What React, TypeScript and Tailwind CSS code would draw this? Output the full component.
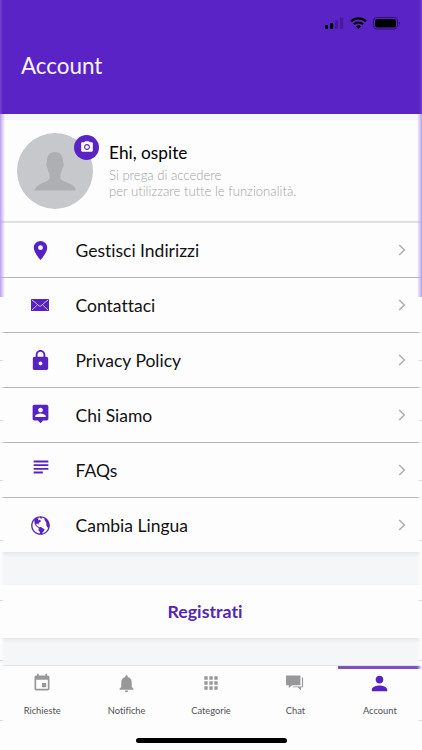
import * as React from "react";
import {
  MdApps,
  MdCameraAlt,
  MdEvent,
  MdLocationOn,
  MdLock,
  MdNotifications,
  MdPerson,
  MdSubject,
} from "react-icons/md";
import { IoMdGlobe } from "react-icons/io";

function MailIcon() {
  return (
    <svg width="18" height="12" viewBox="0 0 18 12" fill="none" className="-ml-px">
      <rect width="18" height="12" rx="0.5" fill="#5722c4" />
      <path d="M1 1l8 6.500L17 1M1 11l5.300-5M17 11l-5.300-5" stroke="#d9ccf5" strokeWidth="0.9" />
    </svg>
  );
}

function PersonPinIcon() {
  return (
    <svg width="21" height="21" viewBox="0 0 24 24" fill="currentColor" className="-mt-1">
      <path d="M19 2H5c-1.110 0-2 .9-2 2v14c0 1.100.89 2 2 2h4l3 3 3-3h4c1.100 0 2-.9 2-2V4c0-1.100-.9-2-2-2zm-7 3.300c1.490 0 2.700 1.210 2.700 2.700s-1.210 2.700-2.700 2.700S9.300 9.490 9.300 8s1.210-2.700 2.700-2.700zM18 16H6v-.9c0-2 4-3.100 6-3.100s6 1.100 6 3.100v.9z" />
    </svg>
  );
}

function ChatIcon() {
  return (
    <svg width="18" height="16" viewBox="0 0 18 16" fill="currentColor">
      <path d="M.6.500h13.200c.4 0 .6.200.6.600v8.600c0 .4-.2.600-.6.600H6L2.800 13v-2.700H.6c-.4 0-.6-.2-.6-.6V1.100C0 .7.200.5.600.5z" />
      <path d="M15.900 2.500h.6c.4 0 .6.200.6.600v8.600c0 .4-.2.600-.6.600h-1.500v3l-3.300-3H6.300l.8-.8h8.800z" />
    </svg>
  );
}

const menuItems = [
  { label: "Gestisci Indirizzi", icon: <MdLocationOn size={23} /> },
  { label: "Contattaci", icon: <MailIcon /> },
  { label: "Privacy Policy", icon: <MdLock size={23} /> },
  { label: "Chi Siamo", icon: <PersonPinIcon /> },
  { label: "FAQs", icon: <MdSubject size={22} className="-mt-1.5" /> },
  { label: "Cambia Lingua", icon: <IoMdGlobe size={23} /> },
];

const tabs = [
  { label: "Richieste", icon: <MdEvent size={20} /> },
  { label: "Notifiche", icon: <MdNotifications size={21} /> },
  { label: "Categorie", icon: <MdApps size={20} /> },
  { label: "Chat", icon: <ChatIcon /> },
  { label: "Account", icon: <MdPerson size={23} />, active: true },
];

function StatusIcons() {
  return (
    <svg width="76" height="14" viewBox="0 0 76 14" className="absolute left-[324px] top-4">
      <rect x="1" y="9" width="3" height="4" rx="0.8" />
      <rect x="6" y="7" width="3.2" height="6" rx="0.8" />
      <rect x="11" y="4.3" width="3.2" height="8.7" rx="0.8" opacity="0.22" />
      <rect x="16" y="1.5" width="3.2" height="11.5" rx="0.8" opacity="0.22" />
      <path d="M27 5.400a11 11 0 0 1 15 0M29.800 8.300a7 7 0 0 1 9.400 0" fill="none" stroke="#000" strokeWidth="2.2" />
      <path d="M32 10.500a3.700 3.700 0 0 1 5 0L34.500 13z" />
      <rect x="49.500" y="1.500" width="24" height="11.500" rx="3.200" fill="none" stroke="#000" opacity="0.45" />
      <rect x="51" y="3" width="21" height="8.500" rx="2" />
      <path d="M75 5.500v3.500c1.300-.6 1.300-2.900 0-3.500z" opacity="0.5" />
    </svg>
  );
}

function Header() {
  return (
    <header className="relative h-[114px] bg-[#5a23c6] px-[21px] pt-[51px]">
      <StatusIcons />
      <h1 className="text-[22.400px] leading-[30px] text-[#f8f4ff]">Account</h1>
    </header>
  );
}

function Profile() {
  return (
    <section className="mt-1.5 flex h-[101px] items-center bg-[#fdfdfe] pl-[17px]">
      <div className="relative size-[76px] shrink-0 rounded-full bg-[#c7c8cc]">
        <svg width="76" height="76" viewBox="0 0 76 76">
          <path
            d="M38 19c-5.500 0-8.500 4-8 10l-.8 1.500c0 2 .5 4 1.500 5 .3 2.500 1 4 1.800 5.500v4.500c-1.500 3.500-10.500 4.500-13 8.500L17 57.500h42L57.500 54c-2.500-4-12.500-5-14-8.500V41c.8-1.500 1.500-3 1.800-5.500 1-1 1.500-3 1.500-5L46 29c.5-6-2.500-10-8-10z"
            fill="#aeafb2"
          />
        </svg>
        <div className="absolute left-[57px] top-0.5 flex size-[25px] items-center justify-center rounded-full bg-[#5a23c6] text-white">
          <MdCameraAlt size={14} />
        </div>
      </div>
      <div className="-mt-px ml-4">
        <p className="text-[17.300px] leading-6">Ehi, ospite</p>
        <p className="mt-0.5 text-[13.100px] font-light leading-4 text-[#a2a2a4]">
          Si prega di accedere
          <br />
          per utilizzare tutte le funzionalità.
        </p>
      </div>
    </section>
  );
}

function Menu() {
  return (
    <nav className="border-t-2 border-[#e1e1e4] shadow-[0_2px_4px_rgba(0,0,0,0.07)]">
      {menuItems.map((item, i) => (
        <a
          key={item.label}
          className={`flex items-center bg-[#fdfdfe] ${
            i < menuItems.length - 1 ? "h-[55px] border-b border-[#b6b6b8] shadow-[0_1px_0_#e4e4e6]" : "h-[54px]"
          }`}
        >
          <span className="ml-7 flex w-[25px] justify-center text-[#5722c4]">{item.icon}</span>
          <span className="ml-[22.500px] flex-1 pt-0.5 text-[17.500px] text-[#111]">{item.label}</span>
          <svg width="8" height="12" viewBox="0 0 8 12" className="mr-4" fill="none">
            <path d="M1.200 1L6.300 6l-5.100 5" stroke="#b3b3b5" strokeWidth="1.700" />
          </svg>
        </a>
      ))}
    </nav>
  );
}

function TabBar() {
  return (
    <footer className="mt-auto h-[85px] border-t border-[#e2e3e9] bg-[#fdfdfe]">
      <div className="flex">
        {tabs.map((tab) => (
          <div
            key={tab.label}
            className={`flex h-[64px] flex-1 flex-col items-center border-t-3 ${
              tab.active ? "border-[#7d50c6] text-[#5722c4]" : "border-transparent text-[#98989a]"
            }`}
          >
            <span className="mt-0.5 flex h-6 items-center">{tab.icon}</span>
            <span className="mt-2 text-[9.300px] leading-4 text-[#505052]">{tab.label}</span>
          </div>
        ))}
      </div>
      <div className="mx-auto mt-2 h-[5px] w-[151px] rounded-full bg-black" />
    </footer>
  );
}

const ticks = [360, 420, 480, 540, 600, 660, 720];

// Soft vertical edges: header colour bleeds down, faint row marks below it
function Edge({ side }: { side: "left" | "right" }) {
  return (
    <div
      className={`pointer-events-none absolute top-0 h-full w-[5px] ${
        side === "left" ? "left-0" : "right-0 -scale-x-100"
      }`}
    >
      <div className="absolute top-0 h-[114px] w-[3px] bg-linear-to-r from-white/15 to-transparent" />
      <div className="absolute top-[114px] h-[183px] w-full bg-linear-to-r from-[#b99ff0] to-transparent" />
      <div className="absolute bottom-0 top-[297px] w-full bg-linear-to-r from-[#fdfdfe] to-transparent" />
      {ticks.map((y) => (
        <div key={y} className="absolute h-px w-full bg-linear-to-r from-[#d2d2d6] to-transparent" style={{ top: y }} />
      ))}
    </div>
  );
}

export default function App() {
  return (
    <div className="relative flex h-[750px] w-[422px] flex-col overflow-hidden bg-[#f5f6f8] font-[Lato,sans-serif] text-black [font-variant-ligatures:none]">
      <Header />
      <Profile />
      <Menu />
      <button className="mt-[33px] h-[53px] shrink-0 bg-[#fdfdfe] pb-px pr-3 text-[17.800px] font-bold text-[#5527b5] shadow-[0_2px_4px_rgba(0,0,0,0.07)]">
        Registrati
      </button>
      <TabBar />
      <Edge side="left" />
      <Edge side="right" />
    </div>
  );
}
